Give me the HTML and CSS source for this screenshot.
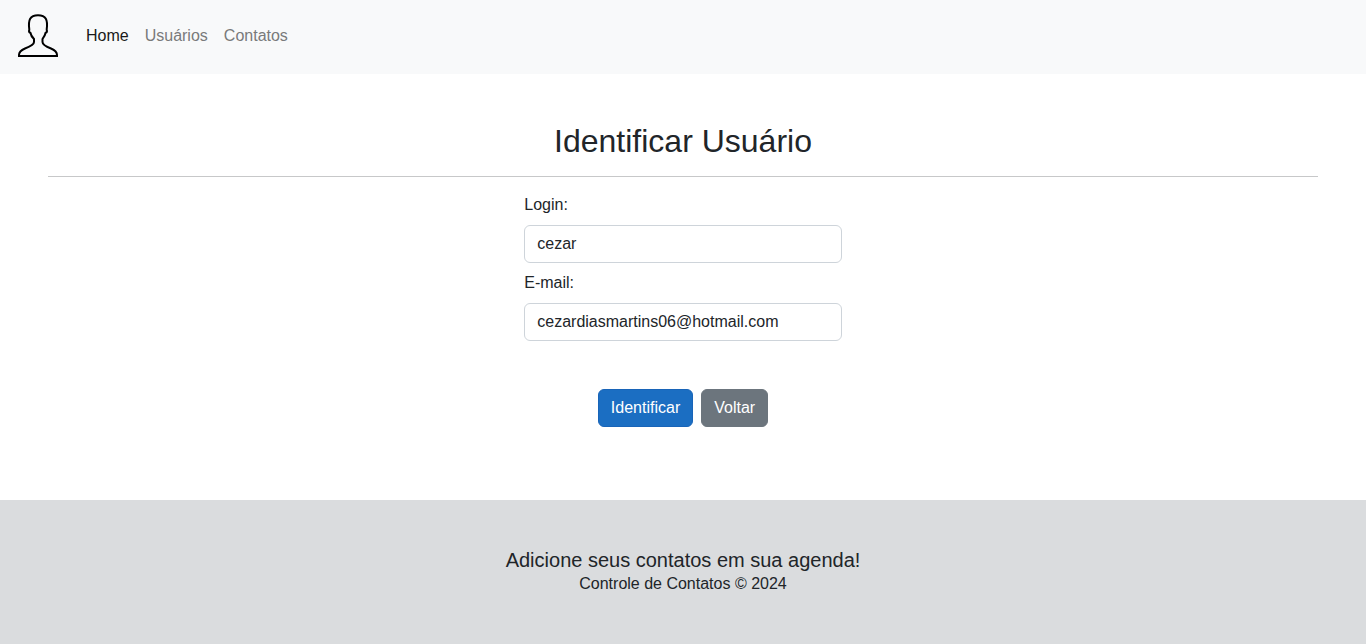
FILE: index.html
```html
<!DOCTYPE html>
<html lang="pt-BR">
<head>
<meta charset="utf-8">
<meta name="viewport" content="width=device-width, initial-scale=1">
<title>Identificar Usuário</title>
<link rel="stylesheet" href="styles.css">
</head>
<body>
<header class="navbar">
  <a class="brand" href="#" aria-label="Início">
    <svg class="brand-icon" viewBox="0 0 44 44" fill="none" stroke="#000" stroke-width="2" aria-hidden="true">
      <path d="M3 42V41C3 38.500 5.500 36 9 34.500C13 33 18 31 18 28V25C16 23 14.800 21 14.500 19C13.200 18.500 12.800 17 13.300 15.500C12 6 14 1.300 22 1.300S32 6 30.700 15.500C31.200 17 30.800 18.500 29.500 19C29.200 21 28 23 26.500 25V28C26.500 31 31 33 35 34.500C38.500 36 41 38.500 41 41V42Z"/>
    </svg>
  </a>
  <nav class="nav">
    <a class="nav-link active" href="#">Home</a>
    <a class="nav-link" href="#">Usuários</a>
    <a class="nav-link" href="#">Contatos</a>
  </nav>
</header>
<main class="content">
  <h2 class="title">Identificar Usuário</h2>
  <hr class="divider">
  <form class="form">
    <div class="field">
      <label for="login">Login:</label>
      <input class="control" id="login" type="text" value="cezar">
    </div>
    <div class="field">
      <label for="email">E-mail:</label>
      <input class="control" id="email" type="email" value="cezardiasmartins06@hotmail.com">
    </div>
    <div class="actions">
      <button class="btn btn-primary" type="button">Identificar</button>
      <button class="btn btn-secondary" type="button">Voltar</button>
    </div>
  </form>
</main>
<footer class="footer">
  <p class="slogan">Adicione seus contatos em sua agenda!</p>
  <p>Controle de Contatos © 2024</p>
</footer>
</body>
</html>
```

FILE: styles.css
```css
*, *::before, *::after {
  box-sizing: border-box;
}

body {
  margin: 0;
  min-height: 100vh;
  display: flex;
  flex-direction: column;
  background: #fff;
  color: #212529;
  font-family: "Liberation Sans", Arial, sans-serif;
  font-size: 16px;
  line-height: 24px;
}

.navbar {
  display: flex;
  align-items: center;
  gap: 18px;
  padding: 14px 16px 16px;
  background: #f8f9fa;
}

.brand,
.brand-icon {
  display: block;
}

.brand-icon {
  width: 44px;
  height: 44px;
}

.nav {
  display: flex;
}

.nav-link {
  padding: 10px 8px;
  color: #797a7a;
  text-decoration: none;
}

.nav-link.active {
  color: #191919;
}

.content {
  flex: 1;
  padding: 48px;
}

.title {
  margin: 0;
  font-size: 32px;
  font-weight: 400;
  line-height: 38px;
  text-align: center;
}

.divider {
  margin: 16px 0;
  border: 0;
  border-top: 1px solid #c7c8c9;
}

.form {
  display: flex;
  flex-direction: column;
  gap: 8px;
  width: 25%;
  min-width: 280px;
  margin: 0 auto;
}

.field {
  display: flex;
  flex-direction: column;
  gap: 8px;
}

.control {
  width: 100%;
  height: 38px;
  padding: 6px 12px;
  border: 1px solid #ced4da;
  border-radius: 6px;
  background: #fff;
  color: #212529;
  font: inherit;
}

.actions {
  display: flex;
  justify-content: center;
  gap: 8px;
  margin-top: 40px;
}

.btn {
  padding: 6px 12px;
  border: 1px solid transparent;
  border-radius: 6px;
  color: #fff;
  font: inherit;
  cursor: pointer;
}

.btn-primary {
  border-color: #1864b8;
  background: #1b6ec2;
}

.btn-secondary {
  border-color: #6c757d;
  background: #6c757d;
}

.footer {
  padding: 48px;
  background: #dadcde;
  text-align: center;
}

.footer p {
  margin: 0;
}

.footer .slogan {
  font-size: 20px;
}
```
